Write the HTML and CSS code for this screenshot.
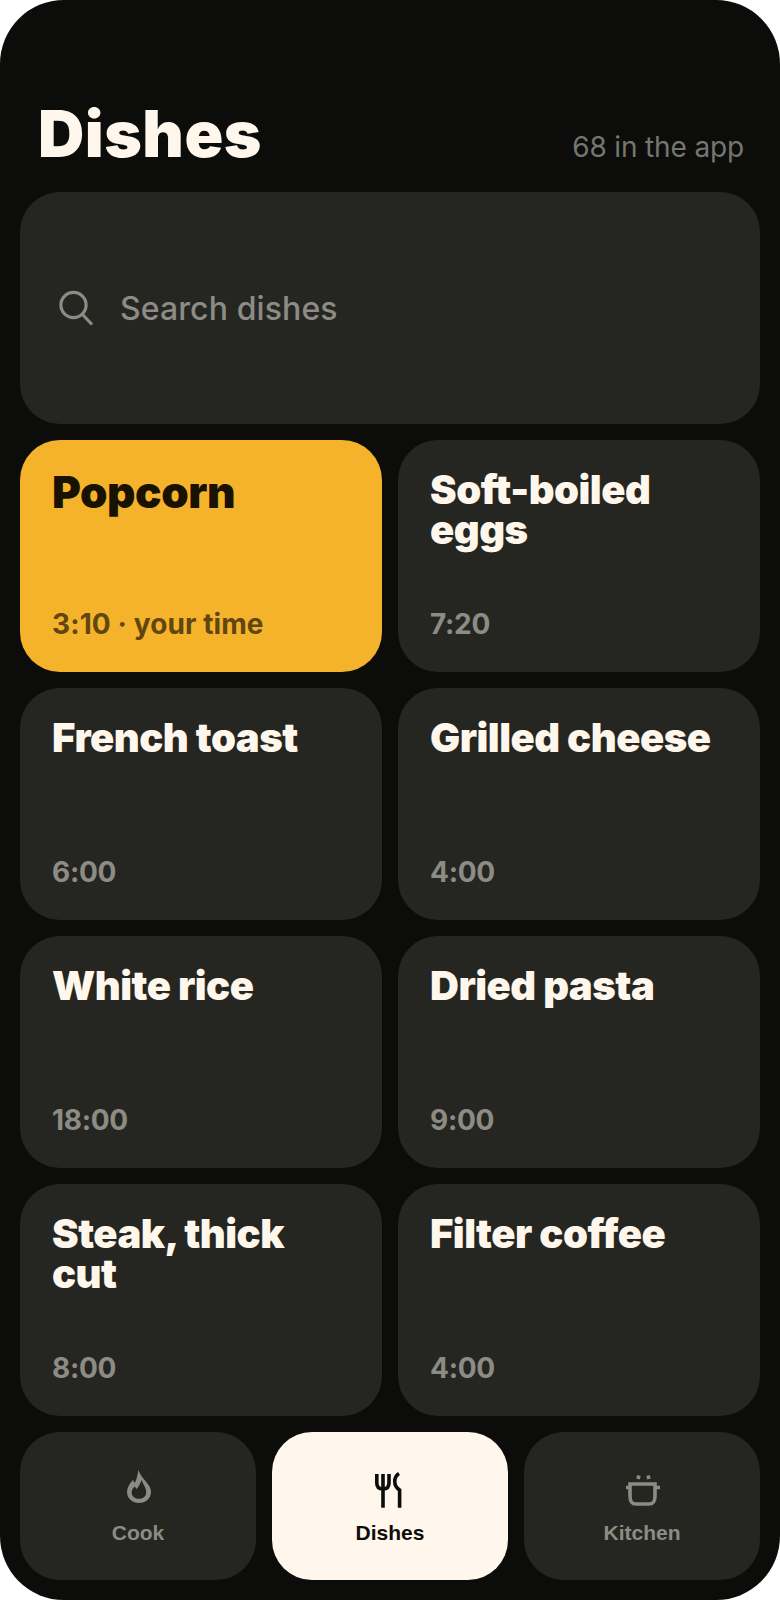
FILE: index.html
```html
<!DOCTYPE html>
<html lang="en">
<head>
<meta charset="UTF-8">
<meta name="viewport" content="width=device-width, initial-scale=1.0">
<title>Dishes</title>
<link rel="stylesheet" href="styles.css">
</head>
<body>
<div class="screen">
  <header class="header">
    <h1>Dishes</h1>
    <span class="count">68 in the app</span>
  </header>

  <div class="search">
    <svg class="search-icon" viewBox="0 0 36 36" fill="none" stroke="currentColor" stroke-width="3.2">
      <circle cx="15.5" cy="15" r="12.6"/>
      <path d="M25 25 L34 34.5"/>
    </svg>
    <span>Search dishes</span>
  </div>

  <div class="grid">
    <div class="card active">
      <h2>Popcorn</h2>
      <div class="time">3:10 · your time</div>
    </div>
    <div class="card">
      <h2>Soft-boiled eggs</h2>
      <div class="time">7:20</div>
    </div>
    <div class="card">
      <h2>French toast</h2>
      <div class="time">6:00</div>
    </div>
    <div class="card">
      <h2>Grilled cheese</h2>
      <div class="time">4:00</div>
    </div>
    <div class="card">
      <h2>White rice</h2>
      <div class="time">18:00</div>
    </div>
    <div class="card">
      <h2>Dried pasta</h2>
      <div class="time">9:00</div>
    </div>
    <div class="card">
      <h2>Steak, thick cut</h2>
      <div class="time">8:00</div>
    </div>
    <div class="card">
      <h2>Filter coffee</h2>
      <div class="time">4:00</div>
    </div>
  </div>

  <nav class="tabs">
    <div class="tab">
      <svg class="tab-icon" viewBox="0 0 40 40" fill="currentColor" fill-rule="evenodd">
        <path d="M20.3 1 C22 6 26 10 29 14 C31.5 17 33 19.5 33 23 C33 29.5 27.5 34 21 34 C14.5 34 9 29.5 9 23 C9 18.5 11.5 14.5 15 11 L16.8 14 C18.5 10.5 19.8 6 20.3 1 Z M13.7 23.5 C13.7 21 14.8 19 16.8 17.5 L18.5 20 C20.5 18 22.5 14.5 23.5 11 C25 15 28.2 18.5 28.2 23.5 C28.2 27.5 24.8 29.8 21 29.8 C17 29.8 13.7 27.5 13.7 23.5 Z"/>
      </svg>
      <span>Cook</span>
    </div>
    <div class="tab selected">
      <svg class="tab-icon" viewBox="0 0 40 40" fill="none" stroke="currentColor" stroke-width="3.6">
        <path d="M6.8 5 V14 Q6.8 20 13 20 Q19 20 19 14 V5"/>
        <path d="M13 5 V38.7"/>
        <path d="M29 4.5 C23.5 8 23 17 29.6 21 V38.7"/>
      </svg>
      <span>Dishes</span>
    </div>
    <div class="tab">
      <svg class="tab-icon" viewBox="0 0 40 40" fill="none" stroke="currentColor" stroke-width="3.6">
        <path d="M8 15 H33 V27 C33 33 31 35 27 35 H14 C10 35 8 33 8 27 Z"/>
        <path d="M4 18.5 H8 M33 18.5 H38"/>
        <path d="M17 6.5 L16 10 M26 6.5 L27 10"/>
      </svg>
      <span>Kitchen</span>
    </div>
  </nav>
</div>
</body>
</html>
```

FILE: styles.css
```css
body {
  margin: 0;
  background-color: #ffffff;
  font-family: 'Inter', sans-serif;
}

.screen {
  width: 780px;
  height: 1600px;
  box-sizing: border-box;
  padding: 96px 20px 20px;
  background-color: #0c0c0b;
  border-radius: 64px;
  overflow: hidden;
}

.header {
  display: flex;
  justify-content: space-between;
  align-items: baseline;
  height: 96px;
  padding: 0 16px 0 18px;
}

h1 {
  margin: 0;
  font-size: 64px;
  font-weight: 900;
  line-height: 76px;
  letter-spacing: 0.5px;
  color: #fff6ec;
}

.count {
  font-size: 28px;
  color: #76766f;
  letter-spacing: -0.15px;
}

.search {
  display: flex;
  align-items: center;
  gap: 26px;
  height: 232px;
  padding: 0 38px;
  box-sizing: border-box;
  background-color: #252621;
  border-radius: 40px;
  font-size: 32px;
  font-weight: 500;
  letter-spacing: 0.1px;
  color: #8c8c85;
}

.search-icon {
  width: 36px;
  height: 36px;
  flex: none;
}

.grid {
  display: grid;
  grid-template-columns: 1fr 1fr;
  grid-auto-rows: 232px;
  gap: 16px;
  margin-top: 16px;
}

.card {
  display: flex;
  flex-direction: column;
  justify-content: space-between;
  box-sizing: border-box;
  padding: 30px 32px 31px;
  background-color: #252621;
  border-radius: 40px;
}

.card h2 {
  margin: 0;
  font-size: 40px;
  font-weight: 900;
  line-height: 40px;
  letter-spacing: -0.5px;
  color: #fff6ec;
}

.time {
  font-size: 28px;
  font-weight: 700;
  line-height: 34px;
  letter-spacing: -0.3px;
  color: #8c8c85;
}

.card.active {
  background-color: #f5b32b;
}

.card.active h2 {
  font-size: 44px;
  line-height: 44px;
  letter-spacing: -0.4px;
  color: #1a1200;
}

.card.active .time {
  color: #614610;
  letter-spacing: 0.1px;
}

.tabs {
  display: grid;
  grid-template-columns: repeat(3, 1fr);
  gap: 16px;
  margin-top: 16px;
}

.tab {
  display: flex;
  flex-direction: column;
  align-items: center;
  height: 148px;
  box-sizing: border-box;
  padding-top: 37px;
  background-color: #252621;
  border-radius: 40px;
  font-family: 'Liberation Sans', Arial, sans-serif;
  font-size: 21px;
  font-weight: 700;
  color: #8c8c85;
}

.tab-icon {
  width: 40px;
  height: 40px;
  margin-bottom: 12px;
}

.tab.selected {
  background-color: #fff6ec;
  color: #0c0c0b;
}
```
